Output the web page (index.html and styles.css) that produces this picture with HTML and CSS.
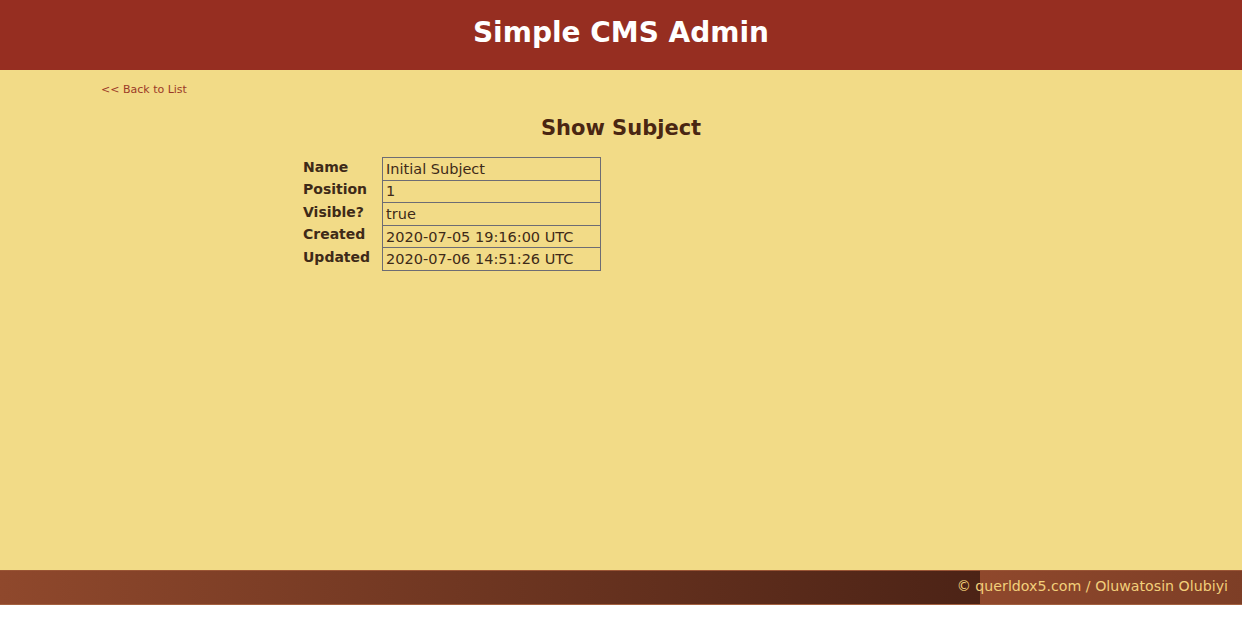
FILE: index.html
```html
<!DOCTYPE html>
<html>
<head>
<meta charset="utf-8">
<title>Simple CMS Admin</title>
<link rel="stylesheet" href="styles.css">
</head>
<body>
<header class="site-header">
  <h1 class="site-title">Simple CMS Admin</h1>
</header>
<main class="main">
  <div class="container">
    <a class="back-link" href="#">&lt;&lt; Back to List</a>
    <h2 class="page-title">Show Subject</h2>
    <table class="attributes">
      <tr><th>Name</th><td>Initial Subject</td></tr>
      <tr><th>Position</th><td>1</td></tr>
      <tr><th>Visible?</th><td>true</td></tr>
      <tr><th>Created</th><td>2020-07-05 19:16:00 UTC</td></tr>
      <tr><th>Updated</th><td>2020-07-06 14:51:26 UTC</td></tr>
    </table>
  </div>
</main>
<footer class="site-footer">
  <p class="copyright">&copy; querldox5.com / Oluwatosin Olubiyi</p>
</footer>
</body>
</html>
```
FILE: styles.css
```css
html, body {
  margin: 0;
  padding: 0;
  background: #ffffff;
  font-family: "DejaVu Sans", Verdana, sans-serif;
}

.site-header {
  background: #962e21;
  height: 70px;
  display: flex;
  align-items: center;
  justify-content: center;
  box-sizing: border-box;
}

.site-title {
  margin: 0 0 6px;
  color: #ffffff;
  font-size: 28px;
  font-weight: bold;
}

.main {
  background: #f2db87;
  min-height: 500px;
}

.container {
  width: 1040px;
  margin: 0 auto;
  padding-top: 8px;
}

.back-link {
  display: inline-block;
  color: #9b3a28;
  font-size: 11px;
  text-decoration: none;
}

.page-title {
  margin: 19px 0 17px;
  text-align: center;
  color: #4a2612;
  font-size: 21px;
  font-weight: bold;
}

.attributes {
  margin-left: 200px;
  border-collapse: collapse;
  font-size: 14px;
  color: #3e2a18;
}

.attributes th {
  text-align: left;
  vertical-align: top;
  padding: 1px 12px 0 2px;
  height: 21.6px;
  font-weight: bold;
}

.attributes td {
  border: 1px solid #6d6c74;
  width: 211px;
  padding: 0 3px;
  height: 21.6px;
  font-size: 14.5px;
}

.site-footer {
  height: 33px;
  background: linear-gradient(to right, #8f482c, #4c2316) repeat-x;
  background-size: 980px 100%;
  border-top: 1px solid #9a5535;
  border-bottom: 1px solid #a3603f;
  display: flex;
  align-items: center;
  justify-content: flex-end;
  padding-right: 14px;
}

.copyright {
  margin: 0 0 3px;
  color: #f2cf7a;
  font-size: 14.2px;
}
```
